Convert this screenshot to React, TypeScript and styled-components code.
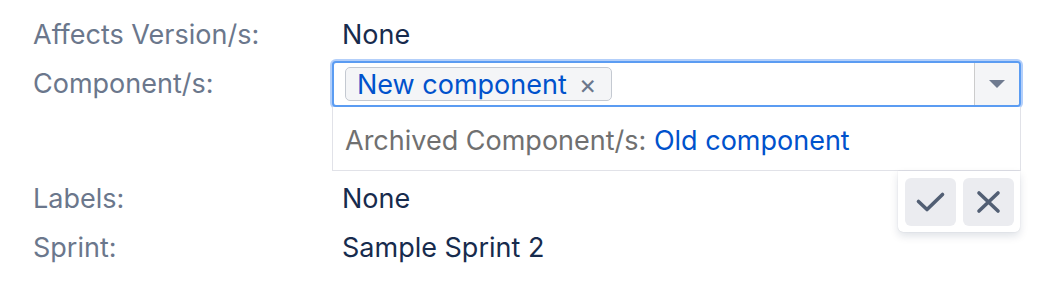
import React from "react";
import styled, { createGlobalStyle } from "styled-components";

const GlobalStyle = createGlobalStyle`
  html, body {
    margin: 0;
    padding: 0;
    background: #ffffff;
  }
  body {
    font-family: Inter, "Liberation Sans", Arial, sans-serif;
    font-size: 27px;
    line-height: 33px;
    -webkit-font-smoothing: antialiased;
  }
`;

const Page = styled.div`
  width: 1038px;
  height: 294px;
  box-sizing: border-box;
  padding: 10px 17px 0 33px;
  display: flex;
  flex-direction: column;
`;

const FieldRow = styled.div<{ $tight?: boolean }>`
  display: flex;
  align-items: flex-start;
  padding: ${props => (props.$tight ? "2px 0 3px" : "8px 0")};
`;

const FieldLabel = styled.div<{ $offset?: number }>`
  flex: 0 0 309px;
  color: #6b778c;
  padding-top: ${props => props.$offset || 0}px;
`;

const FieldValue = styled.div`
  flex: 1;
  color: #172b4d;
`;

const Editor = styled.div`
  position: relative;
  flex: 1;
  margin-left: -10px;
`;

const InputBox = styled.div`
  display: flex;
  height: 46px;
  box-sizing: border-box;
  border: 2px solid #5b9cf2;
  border-radius: 4px;
  box-shadow: 0 0 0 2px #b3cffa;
  background: #ffffff;
  overflow: hidden;
`;

const TagArea = styled.div`
  flex: 1;
  display: flex;
  align-items: center;
  padding: 0 11px;
`;

const Tag = styled.span`
  display: inline-flex;
  align-items: center;
  height: 34px;
  box-sizing: border-box;
  padding: 0 14px 0 11px;
  border: 1px solid #c4c9d1;
  border-radius: 5px;
  background: #f4f5f7;
  color: #0052cc;
`;

const TagRemove = styled.span`
  margin-left: 12px;
  color: #6b778c;
  font-size: 27px;
`;

const DropButton = styled.div`
  flex: 0 0 44px;
  display: flex;
  align-items: center;
  justify-content: center;
  border-left: 1px solid #cccccc;
  background: #f4f5f7;
`;

const Suggestions = styled.div`
  box-sizing: border-box;
  height: 64px;
  padding: 17px 12px 13px;
  border: 1px solid #e1e2e8;
  border-top: none;
  background: #ffffff;
  color: #707070;
  white-space: nowrap;
`;

const LinkText = styled.span`
  color: #0052cc;
`;

const SaveBar = styled.div`
  position: absolute;
  top: 100%;
  right: 1px;
  display: flex;
  gap: 7px;
  padding: 7px 6px 6px 7px;
  background: #ffffff;
  border-radius: 0 0 5px 5px;
  box-shadow: 0 4px 8px rgba(9, 30, 66, 0.13), 0 0 1px rgba(9, 30, 66, 0.2);
`;

const IconButton = styled.button`
  width: 51px;
  height: 48px;
  padding: 0;
  border: none;
  border-radius: 6px;
  background: #ebecf0;
  display: flex;
  align-items: center;
  justify-content: center;
  color: #525f74;
`;

const fields = [
  { label: "Affects Version/s:", value: "None" },
  { label: "Labels:", value: "None" },
  { label: "Sprint:", value: "Sample Sprint 2" }
];

export default function App() {
  return (
    <>
      <GlobalStyle />
      <Page>
        <FieldRow>
          <FieldLabel>{fields[0].label}</FieldLabel>
          <FieldValue>{fields[0].value}</FieldValue>
        </FieldRow>

        <FieldRow $tight>
          <FieldLabel $offset={6}>Component/s:</FieldLabel>
          <Editor>
            <InputBox>
              <TagArea>
                <Tag>
                  New component
                  <TagRemove>×</TagRemove>
                </Tag>
              </TagArea>
              <DropButton>
                <svg width="16" height="8" viewBox="0 0 16 8">
                  <path d="M0 0 H16 L8 8 Z" fill="#6f7b90" />
                </svg>
              </DropButton>
            </InputBox>
            <Suggestions>
              Archived Component/s: <LinkText>Old component</LinkText>
            </Suggestions>
            <SaveBar>
              <IconButton aria-label="Save">
                <svg width="51" height="48" viewBox="0 0 51 48">
                  <path
                    d="M13.5 23.5 L22 31.5 L37.5 16.5"
                    fill="none"
                    stroke="currentColor"
                    strokeWidth="3.6"
                    strokeLinecap="round"
                    strokeLinejoin="round"
                  />
                </svg>
              </IconButton>
              <IconButton aria-label="Cancel">
                <svg width="51" height="48" viewBox="0 0 51 48">
                  <path
                    d="M16 15 L35 33 M35 15 L16 33"
                    fill="none"
                    stroke="currentColor"
                    strokeWidth="3.6"
                    strokeLinecap="round"
                  />
                </svg>
              </IconButton>
            </SaveBar>
          </Editor>
        </FieldRow>

        {fields.slice(1).map(field => (
          <FieldRow key={field.label}>
            <FieldLabel>{field.label}</FieldLabel>
            <FieldValue>{field.value}</FieldValue>
          </FieldRow>
        ))}
      </Page>
    </>
  );
}
